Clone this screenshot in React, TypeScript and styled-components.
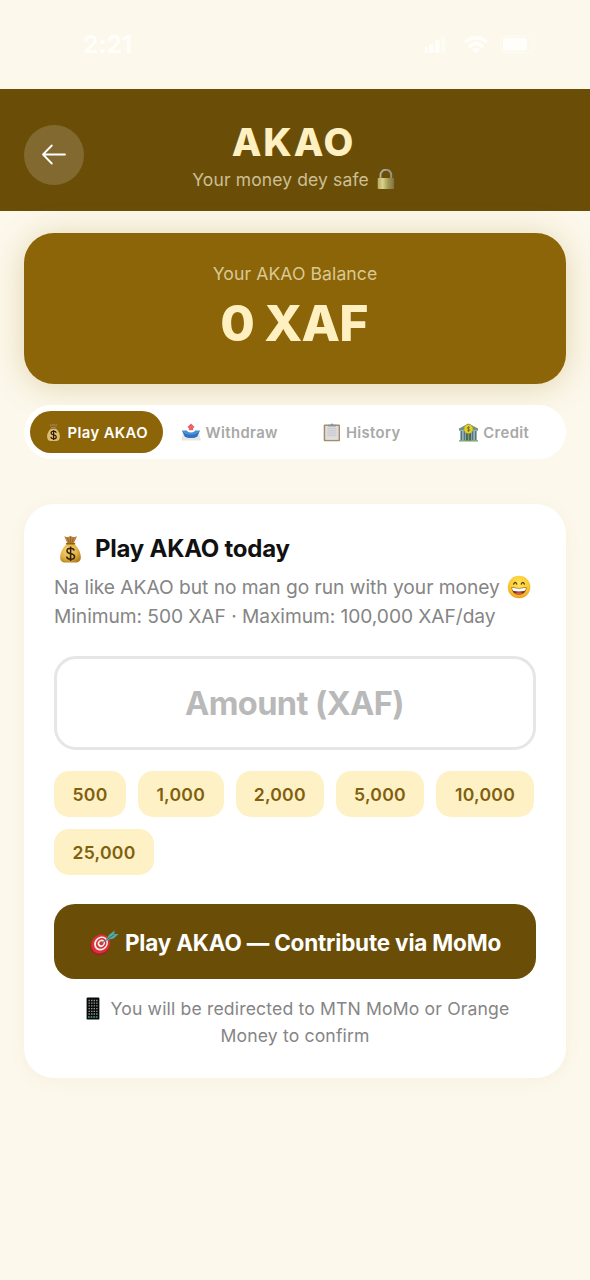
import React from "react";
import styled, { createGlobalStyle } from "styled-components";

const GlobalStyle = createGlobalStyle`
  * { box-sizing: border-box; }
  body { margin: 0; background: #fcf8eb; }
  button { border: 0; padding: 0; background: none; font: inherit; color: inherit; }
`;

const Screen = styled.div`
  width: 590px;
  height: 1280px;
  overflow: hidden;
  background: #fcf8eb;
  font-family: Inter, "Liberation Sans", sans-serif;
  color: #111111;
`;

const StatusBar = styled.div`
  height: 88.5px;
  padding: 30px 53px 0 83px;
  display: flex;
  justify-content: space-between;
  color: #fffefa;
`;

const Clock = styled.span`
  font-size: 24.5px;
  line-height: 28px;
  font-weight: 700;
  letter-spacing: -0.1px;
`;

const StatusIcons = styled.div`
  display: flex;
  padding-top: 5px;
`;

const Header = styled.header`
  height: 122.5px;
  padding: 0 24px;
  display: grid;
  grid-template-columns: 60px 1fr 60px;
  align-items: start;
  background: #6a4e08;
`;

const BackButton = styled.button`
  width: 60px;
  height: 60px;
  margin-top: 36px;
  border-radius: 50%;
  background: #82692f;
  display: grid;
  place-items: center;
`;

const Titles = styled.div`
  padding-top: 30px;
  display: flex;
  flex-direction: column;
  align-items: center;
  margin-left: -3px;
`;

const Title = styled.h1`
  margin: 0 0 4px;
  font-size: 38.6px;
  line-height: 46px;
  font-weight: 800;
  letter-spacing: 1.9px;
  color: #fff0c1;
`;

const Line = styled.div<{ $size: number; $height: number; $color: string; $spacing?: number; $gap?: number; $indent?: number }>`
  display: flex;
  align-items: center;
  justify-content: center;
  gap: ${(p) => p.$gap ?? 0}px;
  padding-left: ${(p) => p.$indent ?? 0}px;
  font-size: ${(p) => p.$size}px;
  line-height: ${(p) => p.$height}px;
  height: ${(p) => p.$height}px;
  letter-spacing: ${(p) => p.$spacing ?? 0}px;
  color: ${(p) => p.$color};
  white-space: nowrap;
`;

const BalanceCard = styled.section`
  height: 151.5px;
  margin: 21.5px 24px 0;
  padding-top: 29px;
  border-radius: 30px;
  background: #8b6508;
  box-shadow: 0 3px 32px rgba(150, 110, 8, 0.25);
`;

const Balance = styled.div`
  margin-top: 2px;
  padding-right: 2px;
  text-align: center;
  font-size: 50px;
  line-height: 71px;
  font-weight: 800;
  letter-spacing: -0.8px;
  color: #fff0c1;
`;

const Tabs = styled.nav`
  position: relative;
  height: 54.5px;
  margin: 20.5px 24px 0;
  padding: 6px;
  display: grid;
  grid-template-columns: repeat(4, 1fr);
  border-radius: 27px;
  background: #fff;
`;

const Tab = styled.button<{ $active?: boolean; $gap?: number }>`
  height: 42.5px;
  padding: 2px 0 0 1px;
  display: flex;
  align-items: center;
  justify-content: center;
  gap: ${(p) => p.$gap ?? 5}px;
  border-radius: 21px;
  background: ${(p) => (p.$active ? "#8b6508" : "transparent")};
  color: ${(p) => (p.$active ? "#ffffff" : "#a8a8a8")};
  font-size: 14.8px;
  font-weight: 600;
  letter-spacing: 0.4px;
  white-space: nowrap;
`;

const Card = styled.main`
  height: 574px;
  margin: 45px 24px 0;
  padding: 29px 30px;
  border-radius: 30px;
  background: #fff;
  box-shadow: 0 3px 18px rgba(139, 101, 8, 0.05);
`;

const CardTitle = styled.h2`
  margin: 0;
  height: 32px;
  padding-left: 1px;
  display: flex;
  align-items: center;
  gap: 9px;
  font-size: 24px;
  line-height: 32px;
  font-weight: 700;
  letter-spacing: -0.25px;
`;

const Copy = styled.div`
  margin-top: 8px;
  > * { justify-content: flex-start; }
`;

const AmountInput = styled.input`
  display: block;
  width: 482px;
  height: 93.5px;
  margin: 26px 0 21px;
  padding: 1px 1px 0 0;
  border: 3px solid #e6e6e6;
  border-radius: 22px;
  outline: 0;
  background: #fff;
  text-align: center;
  font: 700 32.6px Inter, "Liberation Sans", sans-serif;
  letter-spacing: -0.6px;
  &::placeholder { color: #b9b9b9; opacity: 1; }
`;

const Chips = styled.div`
  display: flex;
  flex-wrap: wrap;
  gap: 12px;
`;

const Chip = styled.button<{ $width: number }>`
  width: ${(p) => p.$width}px;
  height: 46px;
  padding-top: 2px;
  border-radius: 15px;
  background: #fef1c5;
  color: #80600f;
  font-size: 17.6px;
  font-weight: 600;
  letter-spacing: 0.25px;
`;

const Submit = styled.button`
  width: 482px;
  height: 75px;
  margin: 29.5px 0 15.5px;
  padding-top: 1px;
  display: flex;
  align-items: center;
  justify-content: center;
  gap: 6px;
  border-radius: 21px;
  background: #6a4e08;
  color: #fff;
  font-size: 22.5px;
  font-weight: 700;
  letter-spacing: -0.19px;
  white-space: nowrap;
`;

const SignalIcon = () => (
  <svg width="26" height="18" viewBox="2 0 26 18" fill="currentColor">
    <rect x="0" y="12" width="4.5" height="6" rx="1.2" />
    <rect x="6" y="9" width="4.5" height="9" rx="1.2" />
    <rect x="12" y="5" width="4.5" height="13" rx="1.2" />
    <rect x="18" y="1" width="4.5" height="17" rx="1.2" opacity=".45" />
  </svg>
);

const WifiIcon = () => (
  <svg width="38" height="19" viewBox="-12 0 38 19" fill="none" stroke="currentColor" strokeWidth="3.6">
    <path d="M2 7.2a16 16 0 0 1 22 0M6 11.6a10 10 0 0 1 14 0" />
    <path d="M9.3 14.4a5.4 5.4 0 0 1 7.4 0L13 18.4z" fill="currentColor" stroke="none" />
  </svg>
);

const BatteryIcon = () => (
  <svg width="48" height="19" viewBox="-11 0 48 19">
    <rect x=".8" y=".8" width="32" height="17" rx="5.2" fill="none" stroke="currentColor" strokeWidth="1.3" opacity=".45" />
    <rect x="3" y="3" width="24" height="12.6" rx="3.2" fill="currentColor" />
    <path d="M34.8 6.2q2.4 3 0 6z" fill="currentColor" opacity=".45" />
  </svg>
);

const BackArrow = () => (
  <svg width="26" height="24" viewBox="0 0 26 24" fill="none" stroke="#fff" strokeWidth="1.8" strokeLinecap="round" strokeLinejoin="round">
    <path d="M24 11.5H2M10.8 2.5L2 11.5l8.8 9" />
  </svg>
);

const LockIcon = () => (
  <svg width="18" height="22" viewBox="0 0 18 22">
    <defs>
      <linearGradient id="lockBody">
        <stop stopColor="#b5ab58" /><stop offset=".3" stopColor="#d9d18e" /><stop offset=".6" stopColor="#a89d55" /><stop offset="1" stopColor="#7d7241" />
      </linearGradient>
    </defs>
    <path d="M3.6 10V6a5.3 5.3 0 0 1 10.6 0V10" fill="none" stroke="#98957f" strokeWidth="2" />
    <path d="M3.2 9V6a5.7 5.7 0 0 1 5.6-5.3" fill="none" stroke="#c4c1b0" strokeWidth=".8" />
    <rect x=".7" y="9" width="16.4" height="11" rx="1" fill="url(#lockBody)" />
  </svg>
);

const MoneyBag = ({ width, height }: { width: number; height: number }) => (
  <svg width={width} height={height} viewBox="0 0 24 30">
    <defs>
      <radialGradient id="bag" cx=".4" cy=".35" r=".7">
        <stop stopColor="#f6d678" /><stop offset=".65" stopColor="#dfb044" /><stop offset="1" stopColor="#b5811f" />
      </radialGradient>
    </defs>
    <path d="M5.500 1.200l3.300 1.200L12 1l3.200 1.400 3.600-1.200-3.300 7.400H8.700z" fill="#bd853b" />
    <path d="M8.800 2.500l1.700 5.600M12 2v6M15.200 2.500l-1.700 5.600" stroke="#8e5c20" strokeWidth=".8" />
    <path d="M8.500 9h7c3.600 2.700 7.200 8.200 7.200 14 0 4-2.600 5.500-5.200 5.500h-11c-2.700 0-5.200-1.500-5.200-5.500C1.300 17.200 5 11.700 8.500 9z" fill="url(#bag)" />
    <path d="M8 9h8.200" stroke="#92611b" strokeWidth="1.700" strokeLinecap="round" />
    <path d="M15.800 16c-.5-1.500-1.900-2.300-3.700-2.300-2.200 0-3.700 1.100-3.700 2.800 0 3.900 7.800 1.900 7.800 5.700 0 1.800-1.700 2.900-4 2.900-2.200 0-3.800-.9-4.200-2.700M12.100 12v14.800" fill="none" stroke="#352308" strokeWidth="1.600" />
  </svg>
);

const SmallMoneyBag = () => (
  <svg width="15" height="19" viewBox="0 0 15 19">
    <path d="M3.500 1l2 .8L7.500 1l2 .8 2-.8-1.700 4H5.200z" fill="#a98048" />
    <path d="M4.800 3.200h5.400" stroke="#765012" strokeWidth=".8" />
    <path d="M5 5.700h5c2.200 1.600 3.900 4.300 3.900 7.800 0 3-1.500 4.500-3.700 4.500H4.800c-2.200 0-3.700-1.500-3.700-4.500 0-3.500 1.700-6.200 3.900-7.800z" fill="#ddbb70" />
    <path d="M10.300 9.700c-.4-1-1.400-1.500-2.700-1.500-1.500 0-2.500.7-2.500 1.800 0 2.600 5.200 1.300 5.200 3.900 0 1.200-1.100 1.900-2.700 1.900s-2.600-.6-2.900-1.900M7.600 7.200v9.700" fill="none" stroke="#2a1b05" strokeWidth="1.200" />
  </svg>
);

const OutboxIcon = () => (
  <svg width="20" height="19" viewBox="0 0 20 19">
    <path d="M2 10h16l2 7.500H.4z" fill="#e9e7e2" />
    <path d="M.9 7.500h4.900q.8 2 4.200 2t4.200-2H19L16 13.700q-6 2.600-12 0z" fill="#4a90d9" />
    <path d="M.9 7.500l3.100 6.200q6 2.600 12 0l3-6.200q-2.200 4.300-9 4.300T.9 7.500z" fill="#2f72bf" />
    <path d="M10 .5l3.600 3.600-1.400 1V7.300H7.800V5.100l-1.400-1z" fill="#e9636a" />
  </svg>
);

const ClipboardIcon = () => (
  <svg width="18" height="19" viewBox="0 0 18 19">
    <rect x=".7" y="1.5" width="16.3" height="16.8" rx="1" fill="#a58b66" />
    <path d="M2.200 3h13.400v13.900H2.200z" fill="#dedee1" />
    <path d="M5 3.400V1.700h2.400q1.500-2.500 3 0H13v1.700z" fill="#8f9298" />
    <path d="M4.300 5.500h9.200M4.300 7.300h9.200M4.300 9.100h9.200M4.300 10.900h9.200M4.300 12.700h9.200" stroke="#c3c3c8" strokeWidth=".8" />
  </svg>
);

const BankIcon = () => (
  <svg width="19" height="19" viewBox="0 0 19 19">
    <path d="M0 5.500L9.500.5 19 5.500v2.200H0z" fill="#76937e" />
    <path d="M1 7.500h17V18H1z" fill="#a8bfc7" />
    <path d="M2.500 8v9M5.300 8v9M13.700 8v9M16.500 8v9" stroke="#557482" strokeWidth="1.400" />
    <path d="M6.700 10h5.600v8H6.700z" fill="#48665a" />
    <path d="M9.500 11v7M0 17.800h19" stroke="#7ba065" strokeWidth="1.200" />
    <circle cx="9.5" cy="6" r="4.5" fill="#e6d22f" stroke="#a69b27" strokeWidth=".6" />
    <path d="M11 4.800c-.7-1-3-.7-2.900.4.100 1.200 3 .6 2.900 1.900-.1 1-2.300 1.300-3.100.2M9.500 3.300v5.500" fill="none" stroke="#6d6a22" strokeWidth=".8" />
  </svg>
);

const SmileIcon = () => (
  <svg width="24" height="24" viewBox="0 0 24 24">
    <defs>
      <radialGradient id="face" cx=".5" cy=".35" r=".65">
        <stop stopColor="#ffe657" /><stop offset=".7" stopColor="#fbc733" /><stop offset="1" stopColor="#e99b20" />
      </radialGradient>
    </defs>
    <circle cx="12" cy="12" r="11.3" fill="url(#face)" />
    <path d="M6.700 9q1.500-3.200 3 0M14.300 9q1.500-3.200 3 0" fill="none" stroke="#633a10" strokeWidth="1.400" strokeLinecap="round" />
    <path d="M4.500 12.300q7.500 1.600 15 0c0 4.600-3.100 7.400-7.500 7.400s-7.500-2.800-7.500-7.400z" fill="#743d18" />
    <path d="M5 12.800q7 1.400 14 0-.1 2-1 3-6 1.300-12 0-.9-1-1-3z" fill="#fff" />
    <path d="M8 18.300q4-2.200 8 0-4 2.400-8 0z" fill="#e35742" />
  </svg>
);

const TargetIcon = () => (
  <svg width="30" height="28" viewBox="0 -2 30 28">
    <ellipse cx="11" cy="15.8" rx="10" ry="9" transform="rotate(-35 11 15.8)" fill="#a31c25" />
    <ellipse cx="11.5" cy="14" rx="10" ry="9" transform="rotate(-50 11.5 14)" fill="#dc3039" />
    <ellipse cx="12" cy="13.5" rx="7.400" ry="6.600" transform="rotate(-50 12 13.5)" fill="#f5eeea" />
    <ellipse cx="12.200" cy="13.400" rx="5.700" ry="5" transform="rotate(-50 12.2 13.4)" fill="#d92e37" />
    <ellipse cx="12.300" cy="13.300" rx="3.900" ry="3.400" transform="rotate(-50 12.3 13.3)" fill="#f5eeea" />
    <circle cx="12.400" cy="13.200" r="2" fill="#d92e37" />
    <path d="M12.500 13.200l8-5.200" stroke="#5d7f80" strokeWidth="1.200" />
    <path d="M17.300 10.300l2.400-5L25.500.5l-.2 3.400 4.300.2-5 4.300z" fill="#56aaa4" />
    <path d="M18.500 9.300l7-5" stroke="#2c7477" strokeWidth="1" />
  </svg>
);

const PhoneIcon = () => (
  <svg width="14" height="23" viewBox="0 0 14 23">
    <rect x=".6" y=".4" width="12.800" height="22.200" rx="1.200" fill="#080a0a" />
    {[3.5, 6.2, 8.900, 11.600, 14.300, 17].map((y) => (
      <path key={y} d={`M2.500 ${y}h9.200`} stroke="#949b98" strokeWidth="1.300" strokeDasharray="1.400 1.150" />
    ))}
    <path d="M2 20h10" stroke="#49a48a" strokeWidth="1.500" strokeDasharray="1.700 .9" />
  </svg>
);

const amounts = [
  { label: "500", width: 72 },
  { label: "1,000", width: 85.5 },
  { label: "2,000", width: 88.5 },
  { label: "5,000", width: 88 },
  { label: "10,000", width: 98 },
  { label: "25,000", width: 100 },
];

export default function App() {
  return (
    <Screen>
      <GlobalStyle />
      <StatusBar>
        <Clock>2:21</Clock>
        <StatusIcons><SignalIcon /><WifiIcon /><BatteryIcon /></StatusIcons>
      </StatusBar>
      <Header>
        <BackButton aria-label="Back"><BackArrow /></BackButton>
        <Titles>
          <Title>AKAO</Title>
          <Line $size={17.5} $height={22} $color="#cdbf93" $spacing={0.13} $gap={8}>
            <span>Your money dey safe</span><LockIcon />
          </Line>
        </Titles>
      </Header>
      <BalanceCard>
        <Line $size={17.6} $height={24} $color="#dac993" $spacing={0.08}>Your AKAO Balance</Line>
        <Balance>0 XAF</Balance>
      </BalanceCard>
      <Tabs>
        <Tab $active $gap={7}><SmallMoneyBag />Play AKAO</Tab>
        <Tab><OutboxIcon />Withdraw</Tab>
        <Tab><ClipboardIcon />History</Tab>
        <Tab><BankIcon />Credit</Tab>
      </Tabs>
      <Card>
        <CardTitle><MoneyBag width={31} height={29} />Play AKAO today</CardTitle>
        <Copy>
          <Line $size={19.2} $height={28.5} $color="#858585" $spacing={-0.03} $gap={7}>
            <span>Na like AKAO but no man go run with your money</span><SmileIcon />
          </Line>
          <Line $size={19.2} $height={28.5} $color="#858585" $spacing={-0.06}>Minimum: 500 XAF · Maximum: 100,000 XAF/day</Line>
        </Copy>
        <AmountInput placeholder="Amount (XAF)" />
        <Chips>
          {amounts.map((a) => <Chip key={a.label} $width={a.width}>{a.label}</Chip>)}
        </Chips>
        <Submit><TargetIcon /><span>Play AKAO — Contribute via MoMo</span></Submit>
        <Line $size={17.6} $height={27} $color="#858585" $spacing={0.15} $gap={11} $indent={5}>
          <PhoneIcon /><span>You will be redirected to MTN MoMo or Orange</span>
        </Line>
        <Line $size={17.6} $height={27} $color="#858585" $spacing={0.15}>Money to confirm</Line>
      </Card>
    </Screen>
  );
}
